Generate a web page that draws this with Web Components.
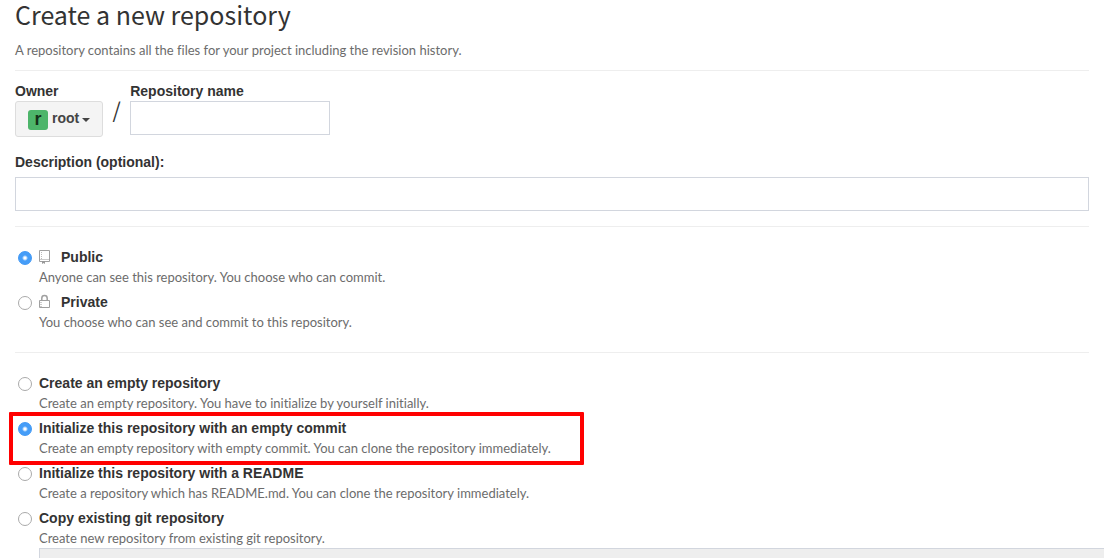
<!DOCTYPE html>
<html lang="en">
<head>
<meta charset="utf-8">
<title>Create a new repository</title>
<style>
html { scrollbar-width: none; }
body { margin: 0; background: #fff; overflow-x: clip; }
</style>
</head>
<body>
<new-repository></new-repository>

<template id="new-repository">
<style>
:host {
  display: block; padding: 0 15px 30px; color: #333;
  font: 13px/20px Lato, sans-serif; font-variant-ligatures: none;
}
h1 { margin: 0; font: 400 25px/28px "Noto Sans CJK JP", "Source Sans Pro", sans-serif; color: #333; }
p { margin: 0; padding: 12px 0 10px; color: #6c6c6c; }
hr { border: 0; border-top: 1px solid #eee; margin: 0; }
form { display: block; }
.names { display: flex; align-items: flex-start; padding-top: 10px; }
.slash { font: 21px/20px "Noto Sans CJK JP", sans-serif; width: 27px; text-align: center; padding-top: 18px; }
.description { padding: 15px 0; }
.group { display: grid; gap: 5px; padding: 20px 0; }
label {
  font: bold 14px/20px "Liberation Sans", Arial, sans-serif; color: #333;
}
input[type="text"], input[type="url"] {
  box-sizing: border-box; height: 34px; padding: 6px 12px; margin: 0;
  border: 1px solid #d2d6de; border-radius: 0; background: #fff;
  font: 14px/20px "Liberation Sans", Arial, sans-serif; color: #555; outline: none;
}
input.clone { display: block; width: 100%; margin-left: 24px; background: #eee; }
</style>
<h1>Create a new repository</h1>
<p>A repository contains all the files for your project including the revision history.</p>
<hr>
<form>
  <div class="names">
    <form-field>
      <label slot="label" for="owner">Owner</label>
      <owner-menu id="owner" initial="r">root</owner-menu>
    </form-field>
    <span class="slash">/</span>
    <form-field>
      <label slot="label" for="name">Repository name</label>
      <input type="text" id="name" style="width:200px">
    </form-field>
  </div>
  <form-field class="description" roomy>
    <label slot="label" for="description">Description (optional):</label>
    <input type="text" id="description" style="width:100%">
  </form-field>
  <hr>
  <div class="group" role="radiogroup" aria-label="Visibility">
    <radio-option>
      <input slot="control" type="radio" name="visibility" id="public" checked>
      <repo-icon slot="icon" name="repo"></repo-icon>
      <label slot="title" for="public">Public</label>
      Anyone can see this repository. You choose who can commit.
    </radio-option>
    <radio-option>
      <input slot="control" type="radio" name="visibility" id="private">
      <repo-icon slot="icon" name="lock"></repo-icon>
      <label slot="title" for="private">Private</label>
      You choose who can see and commit to this repository.
    </radio-option>
  </div>
  <hr>
  <div class="group" role="radiogroup" aria-label="Initial content">
    <radio-option>
      <input slot="control" type="radio" name="init" id="empty">
      <label slot="title" for="empty">Create an empty repository</label>
      Create an empty repository. You have to initialize by yourself initially.
    </radio-option>
    <radio-option highlighted>
      <input slot="control" type="radio" name="init" id="empty-commit" checked>
      <label slot="title" for="empty-commit">Initialize this repository with an empty commit</label>
      Create an empty repository with empty commit. You can clone the repository immediately.
    </radio-option>
    <radio-option>
      <input slot="control" type="radio" name="init" id="readme">
      <label slot="title" for="readme">Initialize this repository with a README</label>
      Create a repository which has README.md. You can clone the repository immediately.
    </radio-option>
    <div>
      <radio-option>
        <input slot="control" type="radio" name="init" id="copy">
        <label slot="title" for="copy">Copy existing git repository</label>
        Create new repository from existing git repository.
      </radio-option>
      <input class="clone" type="url" aria-label="Source repository URL" disabled>
    </div>
  </div>
</form>
</template>

<template id="form-field">
<style>
:host { display: flex; flex-direction: column; align-items: flex-start; }
:host([roomy]) { gap: 5px; }
</style>
<slot name="label"></slot>
<slot></slot>
</template>

<template id="owner-menu">
<style>
:host { display: block; }
button {
  display: flex; align-items: center; box-sizing: border-box; height: 36px; margin: 0;
  padding: 0 12px 2px; border: 1px solid #ddd; border-radius: 3px; background: #f4f4f4;
  font: bold 14px/20px "Liberation Sans", Arial, sans-serif; color: #444;
}
.avatar {
  width: 20px; height: 20px; margin-right: 4px; border-radius: 3px; background: #4db56a;
  color: #143019; font-size: 18px; line-height: 18px; text-align: center;
}
.avatar, .caret { margin-top: 4px; }
.caret {
  margin-left: 3px; border: 4px solid transparent; border-top-color: #444; border-bottom: 0;
}
</style>
<button type="button" aria-haspopup="true"><span class="avatar"></span><slot></slot><span class="caret"></span></button>
</template>

<template id="radio-option">
<style>
:host {
  display: grid; grid-template-columns: 24px 1fr; position: relative;
  line-height: 20px; color: #6c6c6c;
}
.title { display: flex; align-items: center; }
.hint { grid-column: 2; }
::slotted(input) {
  appearance: none; box-sizing: border-box; width: 14px; height: 14px; margin: 4px 3px 2px;
  border: 1px solid #aaa; border-radius: 50%; background: #fff;
}
::slotted(input:checked) {
  border-color: #3f98f5;
  background: radial-gradient(circle, #fff 0 1px, #459df8 3px);
}
.mark {
  display: none; position: absolute; top: -6px; left: -6px; box-sizing: border-box;
  width: 575px; height: 53px; border: 4px solid #f00; border-radius: 1px; pointer-events: none;
}
:host([highlighted]) .mark { display: block; }
</style>
<slot name="control"></slot>
<div class="title"><slot name="icon"></slot><slot name="title"></slot></div>
<div class="hint"><slot></slot></div>
<span class="mark"></span>
</template>

<template id="repo-icon">
<style>
:host { display: block; width: 22px; height: 16px; }
svg { display: none; width: 12px; height: 16px; fill: none; stroke: #a0a0a0; }
:host([name="repo"]) .repo, :host([name="lock"]) .lock { display: block; }
</style>
<svg class="repo" viewBox="0 0 12 16" aria-hidden="true">
  <path d="M3 12.500H.5V1.500H10.500V12.500H6"/>
  <path stroke="#ccc" d="M1 10.500H10"/>
  <path stroke="#bbb" stroke-dasharray="1 1" d="M2.500 3V10"/>
  <path fill="#999" stroke="none" d="M3 12h3v3l-1.500-1L3 15z"/>
</svg>
<svg class="lock" viewBox="0 0 12 16" aria-hidden="true">
  <path d="M.5 6.500H10.500V13.500H.5z"/>
  <path stroke-width="1.500" d="M2.800 6.500V4.300a2.700 2.700 0 0 1 5.400 0V6.500"/>
  <path stroke="#ccc" d="M1 8.500H3M1 10.500H3M1 12.500H3"/>
</svg>
</template>

<script>
class TemplateElement extends HTMLElement {
  constructor() {
    super();
    const template = document.getElementById(this.localName);
    this.attachShadow({ mode: "open" }).append(template.content.cloneNode(true));
  }
}
class FormField extends TemplateElement {}
class RadioOption extends TemplateElement {}
class RepoIcon extends TemplateElement {}
class OwnerMenu extends TemplateElement {
  static formAssociated = true;
  connectedCallback() {
    this.shadowRoot.querySelector(".avatar").textContent = this.getAttribute("initial");
  }
}
class NewRepository extends TemplateElement {}

customElements.define("form-field", FormField);
customElements.define("radio-option", RadioOption);
customElements.define("repo-icon", RepoIcon);
customElements.define("owner-menu", OwnerMenu);
customElements.define("new-repository", NewRepository);
</script>
</body>
</html>
